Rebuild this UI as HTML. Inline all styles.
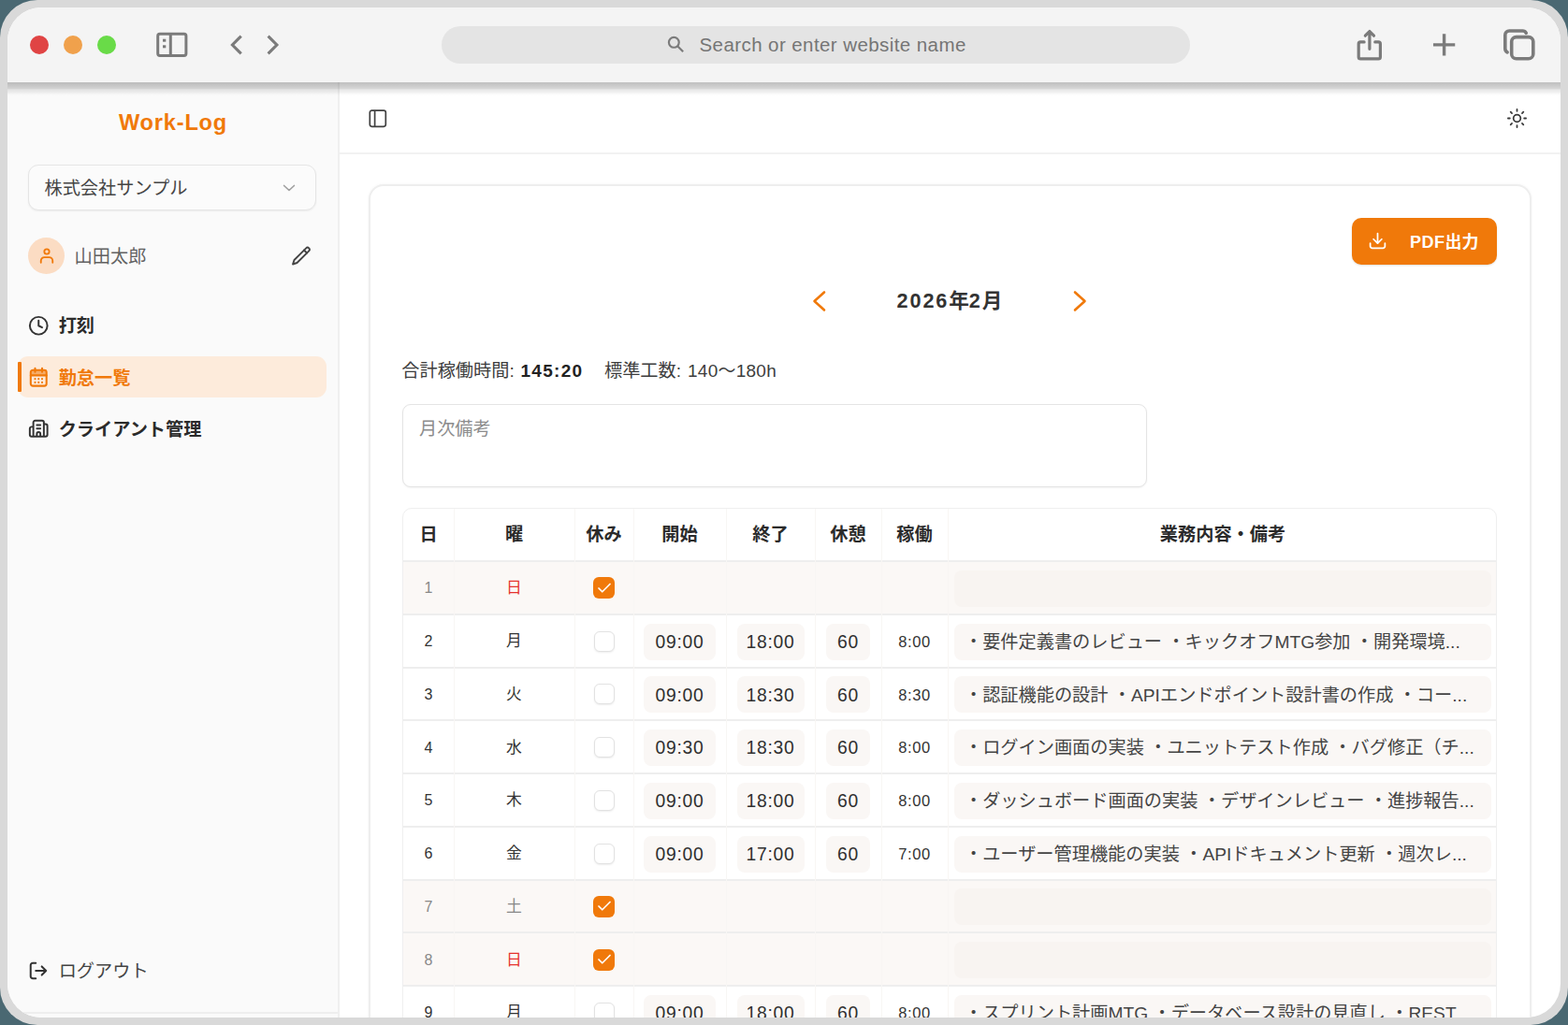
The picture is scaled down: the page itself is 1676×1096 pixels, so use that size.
<!DOCTYPE html>
<html lang="ja">
<head>
<meta charset="utf-8">
<title>Work-Log</title>
<style>
*{box-sizing:border-box;margin:0;padding:0}
html,body{width:1676px;height:1096px;overflow:hidden;background:#4a6872;font-family:"Liberation Sans","Noto Sans CJK JP",sans-serif;color:#2b2b2b}
#frame{position:absolute;left:0;top:0;width:1676px;height:1096px;background:#d9d9d9;border-radius:40px}
#win{position:absolute;left:8px;top:8px;width:1660px;height:1080px;border-radius:36px;background:#fff;overflow:hidden}
#pg{position:absolute;left:-8px;top:-8px;width:1676px;height:1096px}
#pg div,#pg span,#pg svg{position:absolute}
.t{white-space:nowrap;line-height:1}
.c{transform:translateX(-50%)}
#pg .s{position:static}
svg{overflow:visible}
/* toolbar */
#tb{left:8px;top:8px;width:1660px;height:80px;background:#f4f4f4;z-index:5}
#tbs{left:8px;top:88px;width:1660px;height:14px;z-index:5;background:linear-gradient(to bottom,rgba(0,0,0,.25) 0,rgba(0,0,0,.20) 4px,rgba(0,0,0,.16) 6.500px,rgba(0,0,0,.09) 8px,rgba(0,0,0,.06) 10.500px,rgba(0,0,0,.02) 12.500px,rgba(0,0,0,0) 14px)}
.dot{top:38px;width:20px;height:20px;border-radius:50%;z-index:6}
#url{left:472px;top:28px;width:800px;height:40px;border-radius:20px;background:#e4e4e4;z-index:6}
.z6{z-index:6}
/* sidebar */
#side{left:8px;top:88px;width:353px;height:1000px;background:#fafafa}
#sideb{left:361px;top:88px;width:2px;height:1000px;background:#efefef}
#sel{left:30px;top:176px;width:308px;height:49px;border:1px solid #e5e5e5;border-radius:11px;background:#fbfbfb;box-shadow:0 1px 2px rgba(0,0,0,.06)}
#avatar{left:30px;top:254px;width:39px;height:39px;border-radius:50%;background:#fbdcc3}
#active{left:19px;top:381px;width:330px;height:44px;border-radius:11px;background:#fdebdb}
#abar{left:19px;top:387px;width:4px;height:32px;background:#f0790a;border-radius:1px}
/* main */
#mhb{left:363px;top:163px;width:1305px;height:2px;background:#f2f2f2}
#card{left:394px;top:197px;width:1243px;height:920px;border:2px solid #eeeeee;border-radius:16px;background:#fff;box-shadow:0 0 3px rgba(0,0,0,.05)}
#pdf{left:1445px;top:233px;width:155px;height:50px;border-radius:10px;background:#f0790a;box-shadow:0 1px 2px rgba(0,0,0,.12)}
#ta{left:430px;top:432px;width:796px;height:89px;border:1px solid #e4e4e4;border-radius:9px;background:#fff;box-shadow:0 1px 2px rgba(0,0,0,.05)}
/* table */
#tbl{left:430px;top:543px;width:1170px;height:560px;border:1px solid #efefef;border-radius:10px 10px 0 0;overflow:hidden}
.row{left:0;width:1170px;border-top:2px solid #eeeeee}
.hol{background:#fbf8f6}
.vl{top:0;width:1px;height:600px;background:#f8f6f4}
.in{background:#faf7f5;border-radius:8px;height:39px}
.hol .in{background:#f8f4f1}
.cb{width:23px;height:23px;border-radius:6px}
.cb.off{background:#fff;border:1px solid #e2e2e2;box-shadow:0 1px 2px rgba(0,0,0,.07)}
.cb.on{background:#f0790a}
.th{font-size:19.2px;font-weight:bold;color:#2b2b2b}
.tm{font-size:19.3px;letter-spacing:.78px;color:#303030}
.wk{font-size:16.5px;letter-spacing:.57px;color:#333}
.dn{font-size:16px;color:#333}
.hol .dn{color:#888}
.rm{font-size:19.2px;color:#444}
</style>
</head>
<body>
<div id="frame"></div><div id="win"><div id="pg">
<div id="side"></div><div id="sideb"></div>
<div class="t c" style="left:185px;top:119.600px;font-size:23.600px;letter-spacing:.8px;font-weight:bold;color:#f0790a">Work-Log</div>
<div id="sel"></div>
<div class="t" style="left:47.500px;top:192px;font-size:19.2px;color:#454545">株式会社サンプル</div>
<svg style="left:299px;top:190.5px" width="20" height="20" viewBox="0 0 24 24" fill="none" stroke="#a0a0a0" stroke-width="2" stroke-linecap="round" stroke-linejoin="round" ><path d="M5.500 9l6.500 6 6.500-6"/></svg>
<div id="avatar"></div>
<svg style="left:40px;top:263px" width="20" height="20" viewBox="0 0 24 24" fill="none" stroke="#f0790a" stroke-width="2.2" stroke-linecap="round" stroke-linejoin="round" ><circle cx="12" cy="7.200" r="3.200"/><path d="M4.500 21.400v-2.400a4.500 4.500 0 0 1 4.500-4.500h6a4.500 4.500 0 0 1 4.500 4.500v2.400"/></svg>
<div class="t" style="left:79.600px;top:264.500px;font-size:19.2px;color:#626262">山田太郎</div>
<svg style="left:310px;top:262px" width="24" height="24" viewBox="0 0 24 24" fill="none" stroke="#444" stroke-width="1.9" stroke-linecap="round" stroke-linejoin="round" ><path d="M17.2 3.3a2.1 2.1 0 0 1 3 3L7.5 19 3 20.5 4.5 16Z"/><path d="M15 5.5l3 3"/></svg>
<svg style="left:29.75px;top:336.75px" width="22.5" height="22.5" viewBox="0 0 24 24" fill="none" stroke="#333" stroke-width="2.1" stroke-linecap="round" stroke-linejoin="round" ><circle cx="12" cy="12" r="10"/><path d="M12 6v6l4 2"/></svg>
<div class="t" style="left:62.700px;top:339px;font-size:19.2px;font-weight:bold;color:#2b2b2b">打刻</div>
<div id="active"></div><div id="abar"></div>
<svg style="left:29.75px;top:391.5px" width="22.5" height="22.5" viewBox="0 0 24 24" fill="none" stroke="#f0790a" stroke-width="2.2" stroke-linecap="round" stroke-linejoin="round" ><rect x="3" y="4" width="18" height="6" fill="#f0790a" fill-opacity=".55" stroke="none"/><rect x="3" y="4" width="18" height="18" rx="2.5"/><path d="M8 2v4M16 2v4M3 10h18M8 14h.01M12 14h.01M16 14h.01M8 18h.01M12 18h.01M16 18h.01"/></svg>
<div class="t" style="left:62.700px;top:395px;font-size:19.2px;font-weight:bold;color:#f0790a">勤怠一覧</div>
<svg style="left:29.75px;top:447.2px" width="22.5" height="22.5" viewBox="0 0 24 24" fill="none" stroke="#333" stroke-width="2.1" stroke-linecap="round" stroke-linejoin="round" ><path d="M10 12h4M10 8h4M14 21v-3a2 2 0 0 0-4 0v3M6 10H4a2 2 0 0 0-2 2v7a2 2 0 0 0 2 2h16a2 2 0 0 0 2-2V9a2 2 0 0 0-2-2h-2M6 21V5a2 2 0 0 1 2-2h8a2 2 0 0 1 2 2v16"/></svg>
<div class="t" style="left:62.700px;top:450px;font-size:19.2px;font-weight:bold;color:#2b2b2b">クライアント管理</div>
<svg style="left:30px;top:1027px" width="22" height="22" viewBox="0 0 24 24" fill="none" stroke="#333" stroke-width="2.2" stroke-linecap="round" stroke-linejoin="round" ><path d="M9 21H5.5A2.5 2.5 0 0 1 3 18.5v-13A2.5 2.5 0 0 1 5.500 3H9M16 17l5-5-5-5M21 12H9"/></svg>
<div class="t" style="left:62.700px;top:1029.300px;font-size:19.2px;color:#444">ログアウト</div>
<div style="left:8px;top:1082px;width:353px;height:2px;background:#eeeeee"></div>
<div id="mhb"></div>
<svg style="left:393px;top:116px" width="22" height="22" viewBox="0 0 22 22" fill="none" stroke="#404040" stroke-width="1.7" stroke-linejoin="round"><rect x="2.300" y="2.100" width="17" height="17.200" rx="2.200"/><path d="M7.600 2.100v17.200"/></svg>
<svg style="left:1609.5px;top:115.1px" width="23" height="23" viewBox="0 0 24 24" fill="none" stroke="#3a3a3a" stroke-width="1.85" stroke-linecap="round" stroke-linejoin="round" ><circle cx="12" cy="12" r="4"/><path d="M12 2v2M12 20v2M4.9 4.9l1.4 1.4M17.7 17.7l1.4 1.4M2 12h2M20 12h2M4.9 19.1l1.4-1.4M17.7 6.300l1.4-1.4"/></svg>
<div id="card"></div>
<div id="pdf"></div>
<svg style="left:1462.4px;top:247.3px" width="21" height="21" viewBox="0 0 24 24" fill="none" stroke="#fff" stroke-width="2" stroke-linecap="round" stroke-linejoin="round" ><path d="M21 15v3.500a2.500 2.500 0 0 1-2.500 2.500h-13A2.500 2.500 0 0 1 3 18.500V15M7 10l5 5 5-5M12 15V3"/></svg>
<div class="t" style="left:1507px;top:250px;font-size:18px;font-weight:bold;color:#fff"><span class="s" style="letter-spacing:.5px">PDF</span>出力</div>
<svg style="left:866px;top:309px" width="20" height="26" viewBox="0 0 20 26" fill="none" stroke="#f0790a" stroke-width="2.6" stroke-linecap="round" stroke-linejoin="round"><path d="M15 3.5L4.5 13 15 22.5"/></svg>
<svg style="left:1144px;top:309px" width="20" height="26" viewBox="0 0 20 26" fill="none" stroke="#f0790a" stroke-width="2.6" stroke-linecap="round" stroke-linejoin="round"><path d="M5 3.5L15.5 13 5 22.5"/></svg>
<div class="t c" style="left:1015px;top:311px;font-size:21.6px;font-weight:bold;color:#333"><span class="s" style="letter-spacing:1.9px">2026</span>年<span class="s" style="letter-spacing:1.9px">2</span>月</div>
<div class="t" style="left:429.300px;top:387.300px;font-size:19.2px;color:#3d3d3d">合計稼働時間:</div>
<div class="t" style="left:556.5px;top:386.7px;font-size:19px;font-weight:bold;letter-spacing:1.3px;color:#222">145:20</div>
<div class="t" style="left:646px;top:387.300px;font-size:19.2px;color:#3d3d3d">標準工数:</div>
<div class="t" style="left:735px;top:386.7px;font-size:19px;letter-spacing:.25px;color:#3d3d3d">140〜180h</div>
<div id="ta"></div>
<div class="t" style="left:448px;top:448.5px;font-size:19.2px;color:#8c8c8c">月次備考</div>
<div id="tbl">
<div class="t c th" style="left:27.0px;top:18px">日</div>
<div class="t c th" style="left:118.5px;top:18px">曜</div>
<div class="t c th" style="left:214.5px;top:18px">休み</div>
<div class="t c th" style="left:295.5px;top:18px">開始</div>
<div class="t c th" style="left:392.5px;top:18px">終了</div>
<div class="t c th" style="left:475.5px;top:18px">休憩</div>
<div class="t c th" style="left:546.5px;top:18px">稼働</div>
<div class="t c th" style="left:876.0px;top:18px">業務内容・備考</div>
<div class="row hol" style="top:55.0px;height:57.75px">
<div class="t c dn" style="left:27.0px;top:20.475px">1</div>
<div class="t c" style="left:118.5px;top:20.475px;font-size:16.8px;color:#e5322d">日</div>
<div class="cb on" style="left:203.2px;top:16.375px"></div>
<svg style="left:205.5px;top:18.675px" width="18" height="18" viewBox="0 0 24 24" fill="none" stroke="#fff" stroke-width="2.3" stroke-linecap="round" stroke-linejoin="round"><path d="M20 6L9 17l-5-5"/></svg>
<div class="in" style="left:589px;top:8.775000000000002px;width:574px"></div>
</div>
<div class="row" style="top:111.8px;height:57.75px">
<div class="t c dn" style="left:27.0px;top:20.475px">2</div>
<div class="t c" style="left:118.5px;top:20.475px;font-size:16.8px;color:#333">月</div>
<div class="cb off" style="left:203.5px;top:16.875px;width:22px;height:22px"></div>
<div class="in" style="left:257px;top:8.775000000000002px;width:77px"></div>
<div class="in" style="left:357px;top:8.775000000000002px;width:72px"></div>
<div class="in" style="left:452px;top:8.775000000000002px;width:47px"></div>
<div class="t c tm" style="left:295.5px;top:19.075000000000003px">09:00</div>
<div class="t c tm" style="left:392.5px;top:19.075000000000003px">18:00</div>
<div class="t c tm" style="left:475.5px;top:19.075000000000003px">60</div>
<div class="t c wk" style="left:546.5px;top:20.175px">8:00</div>
<div class="in" style="left:589px;top:8.775000000000002px;width:574px"></div>
<div class="t rm" style="left:600px;top:19.275px">・要件定義書のレビュー ・キックオフMTG参加 ・開発環境...</div>
</div>
<div class="row" style="top:168.5px;height:57.75px">
<div class="t c dn" style="left:27.0px;top:20.475px">3</div>
<div class="t c" style="left:118.5px;top:20.475px;font-size:16.8px;color:#333">火</div>
<div class="cb off" style="left:203.5px;top:16.875px;width:22px;height:22px"></div>
<div class="in" style="left:257px;top:8.775000000000002px;width:77px"></div>
<div class="in" style="left:357px;top:8.775000000000002px;width:72px"></div>
<div class="in" style="left:452px;top:8.775000000000002px;width:47px"></div>
<div class="t c tm" style="left:295.5px;top:19.075000000000003px">09:00</div>
<div class="t c tm" style="left:392.5px;top:19.075000000000003px">18:30</div>
<div class="t c tm" style="left:475.5px;top:19.075000000000003px">60</div>
<div class="t c wk" style="left:546.5px;top:20.175px">8:30</div>
<div class="in" style="left:589px;top:8.775000000000002px;width:574px"></div>
<div class="t rm" style="left:600px;top:19.275px">・認証機能の設計 ・APIエンドポイント設計書の作成 ・コー...</div>
</div>
<div class="row" style="top:225.2px;height:57.75px">
<div class="t c dn" style="left:27.0px;top:20.475px">4</div>
<div class="t c" style="left:118.5px;top:20.475px;font-size:16.8px;color:#333">水</div>
<div class="cb off" style="left:203.5px;top:16.875px;width:22px;height:22px"></div>
<div class="in" style="left:257px;top:8.775000000000002px;width:77px"></div>
<div class="in" style="left:357px;top:8.775000000000002px;width:72px"></div>
<div class="in" style="left:452px;top:8.775000000000002px;width:47px"></div>
<div class="t c tm" style="left:295.5px;top:19.075000000000003px">09:30</div>
<div class="t c tm" style="left:392.5px;top:19.075000000000003px">18:30</div>
<div class="t c tm" style="left:475.5px;top:19.075000000000003px">60</div>
<div class="t c wk" style="left:546.5px;top:20.175px">8:00</div>
<div class="in" style="left:589px;top:8.775000000000002px;width:574px"></div>
<div class="t rm" style="left:600px;top:19.275px">・ログイン画面の実装 ・ユニットテスト作成 ・バグ修正（チ...</div>
</div>
<div class="row" style="top:282.0px;height:57.75px">
<div class="t c dn" style="left:27.0px;top:20.475px">5</div>
<div class="t c" style="left:118.5px;top:20.475px;font-size:16.8px;color:#333">木</div>
<div class="cb off" style="left:203.5px;top:16.875px;width:22px;height:22px"></div>
<div class="in" style="left:257px;top:8.775000000000002px;width:77px"></div>
<div class="in" style="left:357px;top:8.775000000000002px;width:72px"></div>
<div class="in" style="left:452px;top:8.775000000000002px;width:47px"></div>
<div class="t c tm" style="left:295.5px;top:19.075000000000003px">09:00</div>
<div class="t c tm" style="left:392.5px;top:19.075000000000003px">18:00</div>
<div class="t c tm" style="left:475.5px;top:19.075000000000003px">60</div>
<div class="t c wk" style="left:546.5px;top:20.175px">8:00</div>
<div class="in" style="left:589px;top:8.775000000000002px;width:574px"></div>
<div class="t rm" style="left:600px;top:19.275px">・ダッシュボード画面の実装 ・デザインレビュー ・進捗報告...</div>
</div>
<div class="row" style="top:338.8px;height:57.75px">
<div class="t c dn" style="left:27.0px;top:20.475px">6</div>
<div class="t c" style="left:118.5px;top:20.475px;font-size:16.8px;color:#333">金</div>
<div class="cb off" style="left:203.5px;top:16.875px;width:22px;height:22px"></div>
<div class="in" style="left:257px;top:8.775000000000002px;width:77px"></div>
<div class="in" style="left:357px;top:8.775000000000002px;width:72px"></div>
<div class="in" style="left:452px;top:8.775000000000002px;width:47px"></div>
<div class="t c tm" style="left:295.5px;top:19.075000000000003px">09:00</div>
<div class="t c tm" style="left:392.5px;top:19.075000000000003px">17:00</div>
<div class="t c tm" style="left:475.5px;top:19.075000000000003px">60</div>
<div class="t c wk" style="left:546.5px;top:20.175px">7:00</div>
<div class="in" style="left:589px;top:8.775000000000002px;width:574px"></div>
<div class="t rm" style="left:600px;top:19.275px">・ユーザー管理機能の実装 ・APIドキュメント更新 ・週次レ...</div>
</div>
<div class="row hol" style="top:395.5px;height:57.75px">
<div class="t c dn" style="left:27.0px;top:20.475px">7</div>
<div class="t c" style="left:118.5px;top:20.475px;font-size:16.8px;color:#888">土</div>
<div class="cb on" style="left:203.2px;top:16.375px"></div>
<svg style="left:205.5px;top:18.675px" width="18" height="18" viewBox="0 0 24 24" fill="none" stroke="#fff" stroke-width="2.3" stroke-linecap="round" stroke-linejoin="round"><path d="M20 6L9 17l-5-5"/></svg>
<div class="in" style="left:589px;top:8.775000000000002px;width:574px"></div>
</div>
<div class="row hol" style="top:452.2px;height:57.75px">
<div class="t c dn" style="left:27.0px;top:20.475px">8</div>
<div class="t c" style="left:118.5px;top:20.475px;font-size:16.8px;color:#e5322d">日</div>
<div class="cb on" style="left:203.2px;top:16.375px"></div>
<svg style="left:205.5px;top:18.675px" width="18" height="18" viewBox="0 0 24 24" fill="none" stroke="#fff" stroke-width="2.3" stroke-linecap="round" stroke-linejoin="round"><path d="M20 6L9 17l-5-5"/></svg>
<div class="in" style="left:589px;top:8.775000000000002px;width:574px"></div>
</div>
<div class="row" style="top:509.0px;height:57.75px">
<div class="t c dn" style="left:27.0px;top:20.475px">9</div>
<div class="t c" style="left:118.5px;top:20.475px;font-size:16.8px;color:#333">月</div>
<div class="cb off" style="left:203.5px;top:16.875px;width:22px;height:22px"></div>
<div class="in" style="left:257px;top:8.775000000000002px;width:77px"></div>
<div class="in" style="left:357px;top:8.775000000000002px;width:72px"></div>
<div class="in" style="left:452px;top:8.775000000000002px;width:47px"></div>
<div class="t c tm" style="left:295.5px;top:19.075000000000003px">09:00</div>
<div class="t c tm" style="left:392.5px;top:19.075000000000003px">18:00</div>
<div class="t c tm" style="left:475.5px;top:19.075000000000003px">60</div>
<div class="t c wk" style="left:546.5px;top:20.175px">8:00</div>
<div class="in" style="left:589px;top:8.775000000000002px;width:574px"></div>
<div class="t rm" style="left:600px;top:19.275px">・スプリント計画MTG ・データベース設計の見直し ・REST ...</div>
</div>
<div class="vl" style="left:54px"></div>
<div class="vl" style="left:183px"></div>
<div class="vl" style="left:246px"></div>
<div class="vl" style="left:345px"></div>
<div class="vl" style="left:440px"></div>
<div class="vl" style="left:511px"></div>
<div class="vl" style="left:582px"></div>
</div>
<div id="tb"></div><div id="tbs"></div>
<div class="dot" style="left:32px;background:#e04444"></div><div class="dot" style="left:68px;background:#f0a14c"></div><div class="dot" style="left:104px;background:#69db48"></div>
<svg class="z6" style="left:166px;top:34px" width="36" height="28" viewBox="0 0 36 28" fill="none" stroke="#7b7b7b" stroke-width="3" stroke-linejoin="round"><rect x="2.700" y="2.200" width="30.200" height="23.300" rx="2.200"/><path d="M16.300 2.200v23.300"/><rect x="8" y="7.700" width="3.300" height="3" fill="#7b7b7b" stroke="none"/><rect x="8" y="14.300" width="3.300" height="3" fill="#7b7b7b" stroke="none"/></svg>
<svg class="z6" style="left:244px;top:36px" width="18" height="24" viewBox="0 0 18 24" fill="none" stroke="#7b7b7b" stroke-width="3.100" stroke-linecap="butt" stroke-linejoin="miter"><path d="M13.700 2.600L4.400 12l9.300 9.400"/></svg>
<svg class="z6" style="left:282px;top:36px" width="18" height="24" viewBox="0 0 18 24" fill="none" stroke="#7b7b7b" stroke-width="3.100" stroke-linecap="butt" stroke-linejoin="miter"><path d="M4.600 2.600L13.900 12l-9.300 9.400"/></svg>
<div id="url"></div>
<svg class="z6" style="left:712px;top:37.100px" width="20" height="20" viewBox="0 0 24 24" fill="none" stroke="#7b7b7b" stroke-width="2.600" stroke-linecap="butt"><circle cx="10" cy="10" r="6.500"/><path d="M14.600 14.600l7.200 7.200"/></svg>
<div class="t z6" style="left:747.500px;top:38.200px;font-size:20.500px;letter-spacing:.42px;color:#757575">Search or enter website name</div>
<svg class="z6" style="left:1449px;top:30px" width="30" height="36" viewBox="0 0 30 36" fill="none" stroke="#7b7b7b" stroke-width="3.200" stroke-linecap="round" stroke-linejoin="round"><path d="M9.100 14.950H5.200a2 2 0 0 0-2 2V30.950a2 2 0 0 0 2 2H24.400a2 2 0 0 0 2-2V16.950a2 2 0 0 0-2-2H20.800"/><path d="M14.900 22.300V3.900M10.300 8.200L14.900 3.500 19.500 8.200"/></svg>
<svg class="z6" style="left:1531px;top:36px" width="26" height="26" viewBox="0 0 26 26" fill="none" stroke="#7b7b7b" stroke-width="3.400" stroke-linecap="butt"><path d="M12.600 0.200V23.500M0.950 11.860H24.250"/></svg>
<svg class="z6" style="left:1600px;top:24px" width="48" height="48" viewBox="0 0 48 48" fill="none" stroke="#7b7b7b" stroke-width="3.600" stroke-linecap="round" stroke-linejoin="round"><rect x="15.700" y="15.600" width="23.100" height="23.200" rx="5"/><path d="M31.300 11.300a4.400 4.400 0 0 0-3.800-2.250H13.200a4.400 4.400 0 0 0-4.400 4.400V28a4.400 4.400 0 0 0 2.300 3.800"/></svg>
</div></div>
</body>
</html>
